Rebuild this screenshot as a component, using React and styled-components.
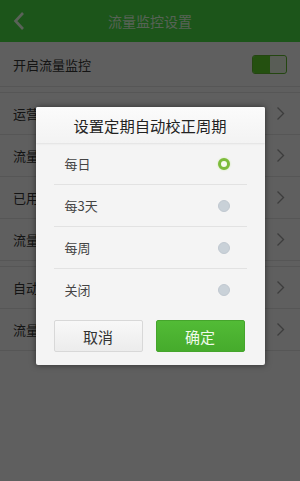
import React from "react";
import styled, { createGlobalStyle } from "styled-components";

const GlobalStyle = createGlobalStyle`
  html, body {
    margin: 0;
    padding: 0;
    width: 300px;
    height: 481px;
    overflow: hidden;
    font-family: "Noto Sans CJK SC", "Noto Sans", sans-serif;
  }
`;

const rows = [
  { section: 1, label: "运营商设置" },
  { section: 1, label: "流量套餐设置" },
  { section: 1, label: "已用流量校正" },
  { section: 1, label: "流量提醒设置" },
  { section: 2, label: "自动校正周期" },
  { section: 2, label: "流量排行" },
];

const options = ["每日", "每3天", "每周", "关闭"];

const Chevron = () => (
  <svg width="9" height="15" viewBox="0 0 9 15">
    <path d="M1.5 1.5 L7.5 7.5 L1.5 13.5" fill="none" stroke="#9a9a9a" strokeWidth="1.4" />
  </svg>
);

const BackArrow = () => (
  <svg width="12" height="20" viewBox="0 0 12 20">
    <path d="M10 2 L2.5 10 L10 18" fill="none" stroke="#e0f5dd" strokeWidth="2.6" />
  </svg>
);

const App = () => {
  const selected = 0;
  return (
    <Screen>
      <GlobalStyle />
      <Header>
        <Back>
          <BackArrow />
        </Back>
        <HeaderTitle>流量监控设置</HeaderTitle>
      </Header>
      <SwitchRow>
        <RowLabel>开启流量监控</RowLabel>
        <Toggle>
          <ToggleOn />
          <ToggleKnob />
        </Toggle>
      </SwitchRow>
      <Group>
        {rows.filter((r) => r.section === 1).map((r) => (
          <Row key={r.label}>
            <RowLabel>{r.label}</RowLabel>
            <Chevron />
          </Row>
        ))}
      </Group>
      <Group>
        {rows.filter((r) => r.section === 2).map((r) => (
          <Row key={r.label}>
            <RowLabel>{r.label}</RowLabel>
            <Chevron />
          </Row>
        ))}
      </Group>

      <Overlay>
        <Dialog>
          <DialogTitle>设置定期自动校正周期</DialogTitle>
          <OptionList>
            {options.map((o, i) => (
              <Option key={o}>
                <OptionLabel>{o}</OptionLabel>
                <Radio $checked={i === selected} />
              </Option>
            ))}
          </OptionList>
          <Buttons>
            <Button>取消</Button>
            <Button $primary>确定</Button>
          </Buttons>
        </Dialog>
      </Overlay>
    </Screen>
  );
};

export default App;

const Screen = styled.div`
  position: relative;
  width: 300px;
  height: 481px;
  background: #ededed;
  overflow: hidden;
`;

const Header = styled.div`
  height: 42px;
  background: #46d443;
  display: flex;
  align-items: center;
  justify-content: center;
  position: relative;
`;

const Back = styled.div`
  position: absolute;
  left: 13px;
  top: 11px;
  display: flex;
`;

const HeaderTitle = styled.div`
  font-size: 14px;
  color: #d8f6d4;
`;

const SwitchRow = styled.div`
  height: 44px;
  padding: 0 13px 0 13px;
  display: flex;
  align-items: center;
  justify-content: space-between;
  border-bottom: 1px solid #d6d6d6;
`;

const Group = styled.div`
  margin-top: 5px;
  border-top: 1px solid #d6d6d6;
`;

const Row = styled.div`
  height: 41px;
  padding: 0 15px 0 13px;
  display: flex;
  align-items: center;
  justify-content: space-between;
  border-bottom: 1px solid #d6d6d6;
`;

const RowLabel = styled.span`
  font-size: 13px;
  color: #333;
`;

const Toggle = styled.div`
  width: 33px;
  height: 17px;
  border-radius: 3px;
  background: #c8d8be;
  border: 1px solid #5ab02c;
  display: flex;
  overflow: hidden;
`;

const ToggleOn = styled.div`
  flex: 1;
  background: #5ac82a;
`;

const ToggleKnob = styled.div`
  width: 16px;
  background: #dfe8d8;
  border-radius: 2px;
`;

const Overlay = styled.div`
  position: absolute;
  inset: 0;
  background: rgba(0, 0, 0, 0.6);
  display: flex;
  justify-content: center;
  align-items: flex-start;
  padding-top: 107px;
`;

const Dialog = styled.div`
  width: 229px;
  height: 258px;
  background: #f4f4f4;
  border-radius: 2px;
  box-shadow: 0 0 6px rgba(0, 0, 0, 0.5);
  display: flex;
  flex-direction: column;
`;

const DialogTitle = styled.div`
  height: 36px;
  display: flex;
  align-items: center;
  justify-content: center;
  font-size: 15.3px;
  color: #222;
  background: linear-gradient(#fbfbfb, #f3f3f3);
  box-shadow: 0 1px 2px rgba(0, 0, 0, 0.08);
  border-radius: 2px 2px 0 0;
`;

const OptionList = styled.div`
  padding: 0 18px;
`;

const Option = styled.div`
  height: 41px;
  padding: 0 17px 0 11px;
  display: flex;
  align-items: center;
  justify-content: space-between;
  border-bottom: 1px solid #e2e2e2;

  &:last-child {
    border-bottom: none;
  }
`;

const OptionLabel = styled.span`
  font-size: 13px;
  color: #444;
`;

const Radio = styled.span`
  width: 12px;
  height: 12px;
  border-radius: 50%;
  box-sizing: border-box;
  background: ${(p) => (p.$checked ? "#f8fbef" : "#c9d1d8")};
  border: ${(p) => (p.$checked ? "3px solid #7dbb3c" : "1px solid #c0c8d0")};
  box-shadow: ${(p) => (p.$checked ? "0 0 2px #c8e8a0" : "none")};
`;

const Buttons = styled.div`
  display: flex;
  gap: 13px;
  padding: 10px 20px 0 18px;
`;

const Button = styled.div`
  flex: 1;
  box-sizing: border-box;
  height: 32px;
  border-radius: 2px;
  display: flex;
  align-items: center;
  justify-content: center;
  font-size: 15px;
  color: ${(p) => (p.$primary ? "#f0faea" : "#333")};
  background: ${(p) =>
    p.$primary ? "linear-gradient(#52bb36, #46ab2c)" : "linear-gradient(#f8f8f8, #ececec)"};
  border: 1px solid ${(p) => (p.$primary ? "#45a52c" : "#d8d8d8")};
`;
